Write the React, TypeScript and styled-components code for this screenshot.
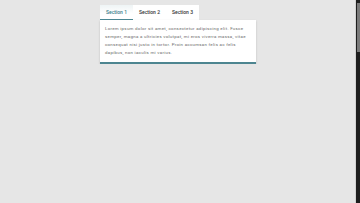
import { useState } from "react"
import styled, { createGlobalStyle, css } from "styled-components"

const GlobalStyle = createGlobalStyle`
  html, body {
    background: #e6e6e6;
  }
  body {
    margin: 0;
    font-family: Roboto, "Liberation Sans", sans-serif;
  }
`

const Page = styled.div`
  padding: 5px 0 0 100px;
`

const Widget = styled.div`
  width: 156px;
`

const TabBar = styled.div`
  display: flex;
  width: fit-content;
  background: #ffffff;
`

const Tab = styled.button<{ active: boolean }>`
  width: 33px;
  height: 15px;
  padding: 0 0 1px;
  border: 0;
  border-bottom: 1.5px solid transparent;
  background: transparent;
  font-family: inherit;
  font-size: 5px;
  font-weight: 500;
  color: #333333;
  cursor: pointer;
  ${({ active }) =>
    active &&
    css`
      color: #3a7c8a;
      border-bottom-color: #4a8692;
      background: linear-gradient(180deg, #eef4f5 0%, #ffffff 60%);
    `}
`

const Panel = styled.div`
  background: #ffffff;
  padding: 5px 6px 5px 5px;
  border-bottom: 2px solid #4d8590;
  box-shadow: 0 1px 2px rgba(0, 0, 0, 0.18);
`

const Text = styled.p`
  margin: 0;
  font-size: 4.4px;
  line-height: 8px;
  letter-spacing: 0.28px;
  color: #6a6a6a;
`

/* the page's scrollbar, drawn over the right edge */
const ScrollRail = styled.div`
  position: fixed;
  top: 0;
  right: 0;
  bottom: 0;
  width: 4px;
  background: #1e1e1e;
  border-left: 1px solid #d2d2d2;
`

const ScrollThumb = styled.div`
  margin: 3px 0 0 1px;
  height: 49px;
  background: #7a7a7a;
`

const sections = [
  "Lorem ipsum dolor sit amet, consectetur adipiscing elit. Fusce semper, magna a ultricies volutpat, mi eros viverra massa, vitae consequat nisi justo in tortor. Proin accumsan felis ac felis dapibus, non iaculis mi varius.",
  "Sed posuere, nunc et tempus vulputate, lorem ipsum facilisis nisi, vel pretium metus leo sed ex.",
  "Curabitur vitae mauris at justo feugiat finibus. Nulla facilisi.",
]

export default function App() {
  const [current, setCurrent] = useState(0)
  return (
    <>
      <GlobalStyle />
      <Page>
        <Widget>
          <TabBar>
            {["Section 1", "Section 2", "Section 3"].map((label, i) => (
              <Tab key={label} active={i === current} onClick={() => setCurrent(i)}>
                {label}
              </Tab>
            ))}
          </TabBar>
          <Panel>
            <Text>{sections[current]}</Text>
          </Panel>
        </Widget>
      </Page>
      <ScrollRail>
        <ScrollThumb />
      </ScrollRail>
    </>
  )
}
